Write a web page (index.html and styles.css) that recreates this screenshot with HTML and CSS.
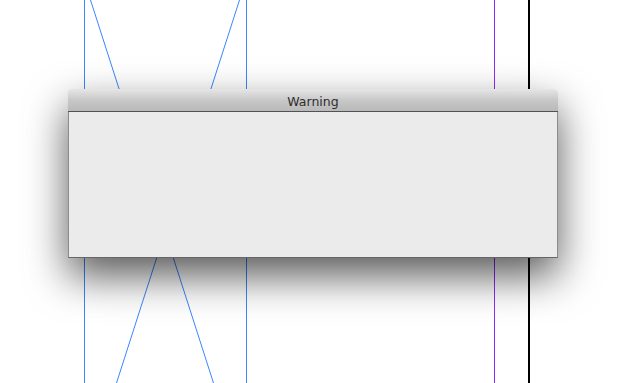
FILE: index.html
```html
<!DOCTYPE html>
<html lang="en">
<head>
    <meta charset="UTF-8">
    <meta name="viewport" content="width=device-width, initial-scale=1.0">
    <title>Warning</title>
    <link rel="stylesheet" href="styles.css">
</head>
<body>
    <div class="desk">
        <svg class="guides" width="629" height="383" viewBox="0 0 629 383">
            <line x1="84.5" y1="0" x2="84.5" y2="383" stroke="#3a86ff" stroke-width="1"/>
            <line x1="246.5" y1="0" x2="246.5" y2="383" stroke="#3a86ff" stroke-width="1"/>
            <line x1="90.5" y1="0" x2="213.5" y2="383" stroke="#3a86ff" stroke-width="1"/>
            <line x1="239.5" y1="0" x2="116.5" y2="383" stroke="#3a86ff" stroke-width="1"/>
            <line x1="494.5" y1="0" x2="494.5" y2="383" stroke="#8b2cff" stroke-width="1"/>
            <line x1="529" y1="0" x2="529" y2="383" stroke="#000" stroke-width="2"/>
        </svg>
        <div class="dialog">
            <div class="dialog-title">Warning</div>
            <div class="dialog-body"></div>
        </div>
    </div>
</body>
</html>
```

FILE: styles.css
```css
body {
    margin: 0;
    background-color: #ffffff;
    font-family: "DejaVu Sans", "Liberation Sans", sans-serif;
}
.desk {
    position: relative;
    width: 629px;
    height: 383px;
    overflow: hidden;
}
.guides {
    position: absolute;
    left: 0;
    top: 0;
}
.dialog {
    position: relative;
    margin: 89px 0 0 68px;
    width: 490px;
    height: 169px;
    display: flex;
    flex-direction: column;
    border-radius: 4px 4px 0 0;
    box-shadow: 0 18px 42px rgba(0, 0, 0, 0.65);
}
.dialog-title {
    height: 22px;
    line-height: 25px;
    text-align: center;
    font-size: 12.5px;
    color: #2e2e2e;
    border-radius: 4px 4px 0 0;
    background: linear-gradient(#e6e6e6, #c6c6c6 55%, #b9b9b9);
    border-bottom: 1px solid #525252;
}
.dialog-body {
    flex: 1;
    background-color: #ebebeb;
    border-left: 1px solid #8c8c8c;
    border-right: 1px solid #8c8c8c;
    border-bottom: 1px solid #666666;
}
```
